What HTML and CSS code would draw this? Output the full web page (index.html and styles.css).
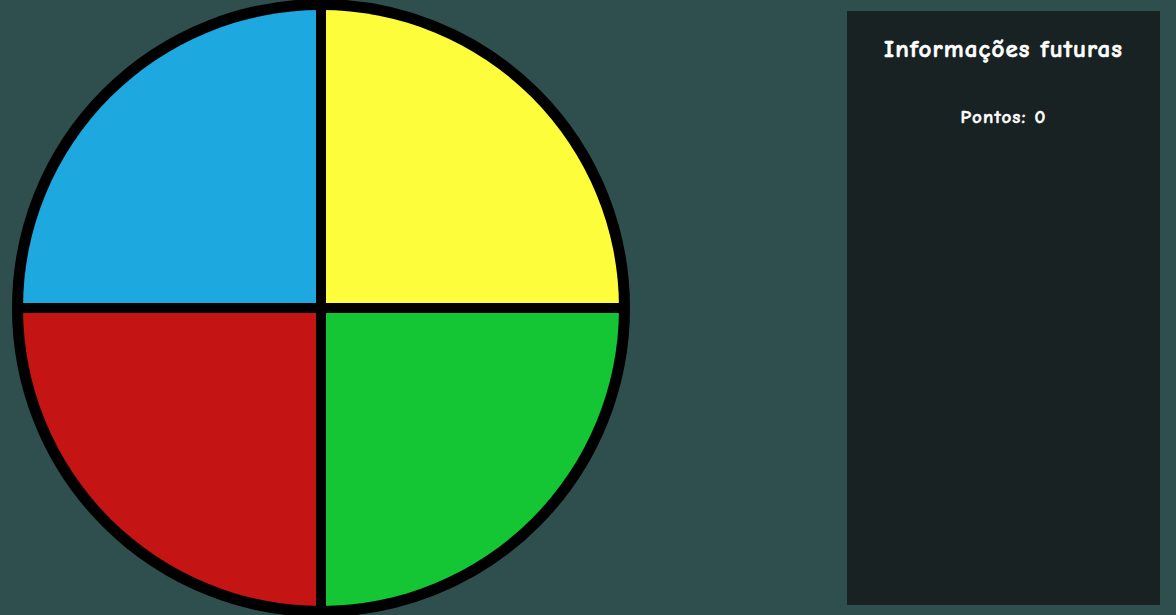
FILE: index.html
```html
<!DOCTYPE html>
<html lang="pt">
<head>
<meta charset="utf-8">
<title>Genius</title>
<link rel="stylesheet" href="styles.css">
</head>
<body>
<main class="game">
  <section class="board-area">
    <div class="board">
      <div class="quad blue"></div>
      <div class="quad yellow"></div>
      <div class="quad red"></div>
      <div class="quad green"></div>
    </div>
  </section>
  <aside class="info">
    <h2 class="info-title">Informações futuras</h2>
    <p class="score">Pontos: 0</p>
  </aside>
</main>
</body>
</html>
```
FILE: styles.css
```css
* { box-sizing: border-box; }
html, body {
  margin: 0;
  height: 100%;
  overflow: hidden;
}
body {
  background: #2f4f4f;
  font-family: "Comic Sans MS", "Comic Neue", "DejaVu Sans", sans-serif;
  color: #ffffff;
}
.game {
  display: flex;
  height: 615px;
  justify-content: space-between;
}
.board-area {
  display: flex;
  align-items: center;
  padding-left: 12px;
  height: 615px;
}
.board {
  flex: none;
  width: 618px;
  height: 618px;
  border-radius: 50%;
  border: 11px solid #000;
  background: #000;
  overflow: hidden;
  display: grid;
  grid-template-columns: 1fr 1fr;
  grid-template-rows: 1fr 1fr;
  gap: 10px;
}
.blue { background: #1ea8e0; }
.yellow { background: #fdfd3b; }
.red { background: #c41414; }
.green { background: #14c633; }
.info {
  width: 313px;
  margin: 11px 16px 10px 0;
  background: #182223;
  display: flex;
  flex-direction: column;
  align-items: center;
}
.info-title {
  margin: 22px 0 0;
  font-size: 25px;
  font-weight: 900;
  letter-spacing: 1.1px;
  line-height: 32px;
  -webkit-text-stroke: 0.6px #fff;
}
.score {
  margin: 40px 0 0;
  font-size: 19px;
  font-weight: 900;
  letter-spacing: 1.15px;
  line-height: 24px;
  -webkit-text-stroke: 0.5px #fff;
}
```
